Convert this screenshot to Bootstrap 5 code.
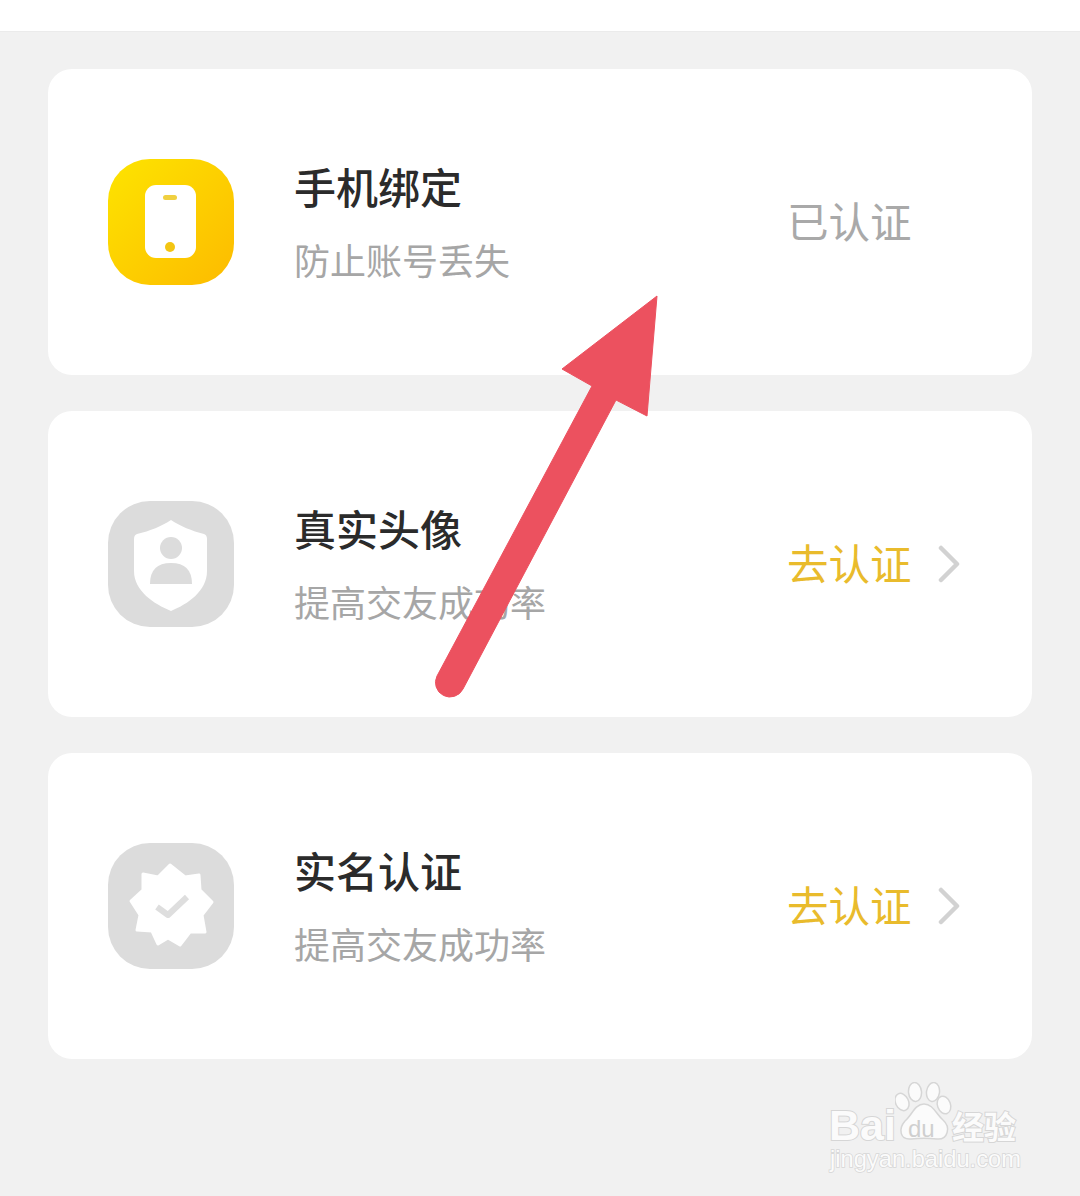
<!DOCTYPE html>
<html lang="zh">
<head>
<meta charset="utf-8">
<title>认证</title>
<link href="https://cdn.jsdelivr.net/npm/bootstrap@5.3.0/dist/css/bootstrap.min.css" rel="stylesheet">
<style>
html,body{margin:0;height:1196px;overflow:hidden}
body{background:#f1f1f1;font-family:"Liberation Sans","Noto Sans CJK SC",sans-serif;position:relative}
.topstrip{height:32px;background:#fff;border-bottom:1px solid #ebebeb}
.stack{padding:37px 48px 0;gap:36px}
.authcard{height:306px;background:#fff;border-radius:24px;padding:0 72px 0 60px}
.appicon{width:126px;height:126px;flex:none;display:block}
.txtcol{margin-left:60px;width:430px}
.ttl{font-size:42px;line-height:48px;font-weight:500;color:#2b2b2b;margin-top:6px}
.subt{font-size:36px;line-height:42px;color:#a6a6a6;margin-top:28px}
.state{font-size:41.5px;line-height:48px;width:123px;white-space:nowrap;flex:none;padding-top:3px}
.rgt{width:173px;margin-left:auto;flex:none;display:flex;align-items:center}
.gray{color:#a9a9a9}
.gold{color:#e9bb2c}
.chev{width:22px;height:38px;margin-left:28px;flex:none}
.overlay{position:absolute;left:0;top:0;pointer-events:none}
.wm{position:absolute;left:826px;top:1076px;width:200px;height:100px}
.wm-bai{position:absolute;left:3px;top:25px;font:700 43px/48px "Liberation Sans",sans-serif;color:#fbfbfb;-webkit-text-stroke:2px #d6d6d6;paint-order:stroke fill}
.wm-du{position:absolute;left:82px;top:39px;font:400 24px/28px "Liberation Sans",sans-serif;color:#cfcfcf}
.wm-cn{position:absolute;left:126px;top:30px;font:700 32px/38px "Noto Sans CJK SC",sans-serif;color:#fbfbfb;-webkit-text-stroke:2px #d6d6d6;paint-order:stroke fill;white-space:nowrap}
.wm-url{position:absolute;left:4px;top:70px;font:400 23.7px/26px "Liberation Sans",sans-serif;color:#fbfbfb;-webkit-text-stroke:1.5px #d6d6d6;paint-order:stroke fill;white-space:nowrap}
.wm-paw{position:absolute;left:69px;top:6px}
</style>
</head>
<body>
<div class="topstrip"></div>
<div class="stack d-flex flex-column">
  <div class="authcard d-flex align-items-center">
    <svg class="appicon" viewBox="0 0 126 126">
      <defs><linearGradient id="gy" x1="0" y1="0" x2="1" y2="1"><stop offset="0" stop-color="#fde400"/><stop offset="1" stop-color="#fdbb00"/></linearGradient></defs>
      <rect width="126" height="126" rx="42" fill="url(#gy)"/>
      <rect x="37" y="26" width="51" height="73" rx="11" fill="#fff"/>
      <rect x="55" y="36" width="14" height="5" rx="2.5" fill="#f0d040"/>
      <circle cx="62" cy="88" r="5" fill="#f3c512"/>
    </svg>
    <div class="txtcol">
      <div class="ttl">手机绑定</div>
      <div class="subt">防止账号丢失</div>
    </div>
    <div class="rgt"><span class="state gray">已认证</span></div>
  </div>
  <div class="authcard d-flex align-items-center">
    <svg class="appicon" viewBox="0 0 126 126">
      <rect width="126" height="126" rx="42" fill="#dcdcdc"/>
      <path d="M63 19 C72 25 84 30 96 33 Q99 34 99 38 V70 C99 90 80 103 63 110 C46 103 26 90 26 70 V38 Q26 34 29 33 C42 30 54 25 63 19 Z" fill="#fff"/>
      <circle cx="63" cy="47" r="11" fill="#dcdcdc"/>
      <path d="M42 83 Q42 62 63 62 Q84 62 84 83 Z" fill="#dcdcdc"/>
    </svg>
    <div class="txtcol">
      <div class="ttl">真实头像</div>
      <div class="subt">提高交友成功率</div>
    </div>
    <div class="rgt"><span class="state gold">去认证</span>
      <svg class="chev" viewBox="0 0 22 38"><path d="M3 3 L19 19 L3 35" fill="none" stroke="#d2d2d2" stroke-width="4.5" stroke-linecap="round" stroke-linejoin="round"/></svg>
    </div>
  </div>
  <div class="authcard d-flex align-items-center">
    <svg class="appicon" viewBox="0 0 126 126">
      <rect width="126" height="126" rx="42" fill="#dcdcdc"/>
      <path d="M62 22 L77 34 L91 32 L92 47 L104 59 L94 72 L97 89 L82 89 L72 102 L60 95 L50 101 L44 88 L29 87 L32 72 L23 58 L35 47 L35 31 L50 34 Z" fill="#fff" stroke="#fff" stroke-width="3" stroke-linejoin="round"/>
      <path d="M49 64 L60 72 L79 54" fill="none" stroke="#dedede" stroke-width="6" stroke-linejoin="round"/>
    </svg>
    <div class="txtcol">
      <div class="ttl">实名认证</div>
      <div class="subt">提高交友成功率</div>
    </div>
    <div class="rgt"><span class="state gold">去认证</span>
      <svg class="chev" viewBox="0 0 22 38"><path d="M3 3 L19 19 L3 35" fill="none" stroke="#d2d2d2" stroke-width="4.5" stroke-linecap="round" stroke-linejoin="round"/></svg>
    </div>
  </div>
</div>

<svg class="overlay" width="1080" height="1196" viewBox="0 0 1080 1196">
  <path d="M657 296 L647 416 L616 400 L463 689 A14.5 14.5 0 0 1 437 676 L592 386 L562 369 Z" fill="#ec515f" stroke="#ec515f" stroke-width="1" stroke-linejoin="round"/>
</svg>

<div class="wm">
  <svg class="wm-paw" width="58" height="60" viewBox="0 0 58 60">
    <g fill="#fbfbfb" stroke="#d6d6d6" stroke-width="1.5">
      <ellipse cx="7" cy="20" rx="6.5" ry="9" transform="rotate(-25 7 20)"/>
      <ellipse cx="20" cy="10" rx="6.5" ry="9.5" transform="rotate(-5 20 10)"/>
      <ellipse cx="38" cy="10" rx="6.5" ry="9.5" transform="rotate(8 38 10)"/>
      <ellipse cx="49" cy="23" rx="6.5" ry="9" transform="rotate(-20 49 23)"/>
      <path d="M29 22 C38 22 41 32 48 38 C56 45 53 58 42 57 C34 56 24 56 16 57 C5 58 3 47 10 39 C17 33 20 22 29 22 Z"/>
    </g>
  </svg>
  <span class="wm-bai">Bai</span>
  <span class="wm-du">du</span>
  <span class="wm-cn">经验</span>
  <span class="wm-url">jingyan.baidu.com</span>
</div>
<script src="https://cdn.jsdelivr.net/npm/bootstrap@5.3.0/dist/js/bootstrap.bundle.min.js"></script>
</body>
</html>
